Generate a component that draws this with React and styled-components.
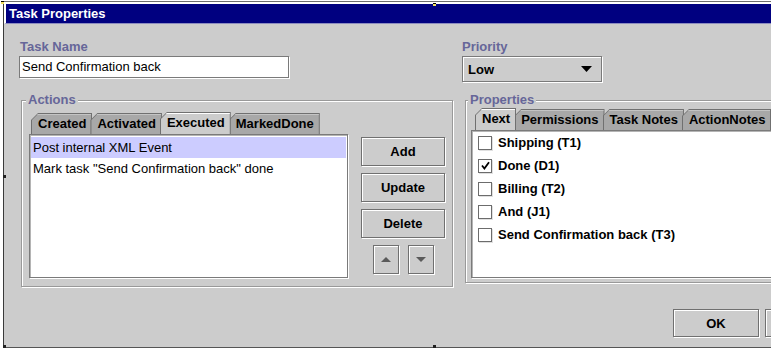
import React from "react";
import styled, { createGlobalStyle } from "styled-components";

const GlobalStyle = createGlobalStyle`
  html, body { margin: 0; padding: 0; background: #ffffff; overflow: hidden; }
  body { font-family: "Liberation Sans", Arial, sans-serif; font-size: 13px; }
  * { box-sizing: border-box; }
`;

const leftTabs = ["Created", "Activated", "Executed", "MarkedDone"];
const rightTabs = ["Next", "Permissions", "Task Notes", "ActionNotes"];
const actions = ["Post internal XML Event", 'Mark task "Send Confirmation back" done'];
const nextTasks = [
  { label: "Shipping (T1)", checked: false },
  { label: "Done (D1)", checked: true },
  { label: "Billing (T2)", checked: false },
  { label: "And (J1)", checked: false },
  { label: "Send Confirmation back (T3)", checked: false },
];

function Tabs({ items, active, lead }) {
  return (
    <TabStrip lead={lead}>
      {items.map((t) => (
        <Tab key={t} active={t === active}>
          <TabFace active={t === active}>{t}</TabFace>
        </Tab>
      ))}
    </TabStrip>
  );
}

function App() {
  return (
    <Page>
      <GlobalStyle />
      <Window>
        <TitleBar>Task Properties</TitleBar>
        <Content>
          <Main>
            <Column>
              <Label>Task Name</Label>
              <TextField>Send Confirmation back</TextField>
              <Group top={15} left={1} padTop={5} padSide={7} padBottom={8}>
                <Legend>Actions</Legend>
                <GroupRow>
                  <TabPane>
                    <Tabs items={leftTabs} active="Executed" lead={2} />
                    <ListBox height={144}>
                      {actions.map((a, i) => (
                        <ListRow key={a} selected={i === 0}>{a}</ListRow>
                      ))}
                    </ListBox>
                  </TabPane>
                  <ButtonColumn>
                    <Btn>Add</Btn>
                    <Btn>Update</Btn>
                    <Btn>Delete</Btn>
                    <ArrowRow>
                      <ArrowBtn>
                        <svg width="10" height="6" viewBox="0 0 10 6"><polygon points="0,5 5,0 10,5" fill="#5a5a5a" /></svg>
                      </ArrowBtn>
                      <ArrowBtn>
                        <svg width="10" height="6" viewBox="0 0 10 6"><polygon points="0,0 10,0 5,5" fill="#5a5a5a" /></svg>
                      </ArrowBtn>
                    </ArrowRow>
                  </ButtonColumn>
                </GroupRow>
              </Group>
            </Column>
            <Column>
              <Label>Priority</Label>
              <Combo>
                <span>Low</span>
                <svg width="11" height="6" viewBox="0 0 11 6"><polygon points="0,0 11,0 5.5,6" fill="#000" /></svg>
              </Combo>
              <Group top={11} left={3} padTop={1} padSide={5} padBottom={4}>
                <Legend>Properties</Legend>
                <TabPane>
                  <Tabs items={rightTabs} active="Next" lead={4} />
                  <ListBox height={148} flat>
                    {nextTasks.map((n) => (
                      <CheckRow key={n.label}>
                        <CheckBox>
                          {n.checked && (
                            <svg width="9" height="9" viewBox="0 0 9 9">
                              <path d="M1 4.5 L3.4 7.5 L8 1.2" stroke="#000" strokeWidth="1.8" fill="none" />
                            </svg>
                          )}
                        </CheckBox>
                        <CheckLabel>{n.label}</CheckLabel>
                      </CheckRow>
                    ))}
                  </ListBox>
                </TabPane>
              </Group>
            </Column>
          </Main>
          <Footer>
            <FooterBtn>OK</FooterBtn>
            <FooterBtn>Cancel</FooterBtn>
          </Footer>
        </Content>
      </Window>
      <Handle x={1} y={1} yellow />
      <Handle x={433} y={3} yellow />
      <Handle x={3} y={175} />
      <Handle x={3} y={345} />
      <Handle x={433} y={345} />
    </Page>
  );
}

export default App;

const Page = styled.div`
  position: relative;
  width: 771px;
  height: 350px;
  padding: 1px 0 0 3px;
  overflow: hidden;
`;

const Window = styled.div`
  width: 860px;
  background: #cccccc;
  border-top: 1px solid #6e6e6e;
  border-left: 1px solid #3a3a3a;
  border-bottom: 1px solid #555555;
`;

const TitleBar = styled.div`
  height: 22px;
  background: #000080;
  border-top: 2px solid #ffffff;
  border-left: 2px solid #ffffff;
  border-bottom: 1px solid #8c8cc0;
  color: #ffffff;
  font-weight: 700;
  font-size: 13px;
  line-height: 19px;
  padding-left: 3px;
`;

const Content = styled.div`
  height: 323px;
  display: flex;
  flex-direction: column;
  padding: 16px 12px 10px 16px;
`;

const Main = styled.div`
  display: grid;
  grid-template-columns: 433px 1fr;
  column-gap: 9px;
`;

const Column = styled.div`
  display: flex;
  flex-direction: column;
  align-items: flex-start;
  min-width: 0;
`;

const Label = styled.div`
  font-weight: 700;
  font-size: 13px;
  line-height: 14px;
  color: #666699;
  margin-bottom: 2px;
`;

const TextField = styled.div`
  width: 270px;
  height: 22px;
  margin-left: -1px;
  background: #ffffff;
  border: 1px solid #7a7a7a;
  box-shadow: 1px 1px 0 #ffffff;
  padding-left: 2px;
  line-height: 20px;
  color: #000;
`;

const Combo = styled.div`
  width: 140px;
  height: 26px;
  display: flex;
  align-items: center;
  justify-content: space-between;
  padding: 0 9px 0 5px;
  background: #cccccc;
  border: 1px solid #7a7a7a;
  box-shadow: inset 1px 1px 0 #ffffff, 1px 1px 0 #ffffff;
  font-weight: 700;
  color: #000;
`;

const Group = styled.fieldset`
  align-self: stretch;
  min-width: 0;
  margin: ${({ top }) => top}px 0 0 ${({ left }) => left}px;
  padding: ${({ padTop, padSide, padBottom }) => `${padTop}px ${padSide}px ${padBottom}px ${padSide}px`};
  border: 1px solid #999999;
  box-shadow: inset 1px 1px 0 #ffffff, 1px 1px 0 #ffffff;
`;

const Legend = styled.legend`
  padding: 0 2px;
  margin-left: -3px;
  background: #cccccc;
  font-weight: 700;
  font-size: 13px;
  line-height: 14px;
  color: #666699;
`;

const GroupRow = styled.div`
  display: flex;
  align-items: flex-start;
`;

const TabPane = styled.div`
  display: flex;
  flex-direction: column;
  width: 320px;
  fieldset > & { width: auto; }
`;

const TabStrip = styled.div`
  display: flex;
  align-items: flex-end;
  height: 22px;
  padding-left: ${({ lead }) => lead}px;
`;

const Tab = styled.div`
  position: relative;
  z-index: ${({ active }) => (active ? 2 : 1)};
  height: ${({ active }) => (active ? 22 : 21)}px;
  margin-left: -2px;
  padding: 1px 1px 0 1px;
  background: #707070;
  clip-path: polygon(0 7px, 7px 0, 100% 0, 100% 100%, 0 100%);
  &:first-child { margin-left: 0; }
`;

const TabFace = styled.div`
  height: 100%;
  padding: 0 5px 0 6px;
  background: ${({ active }) => (active ? "#cccccc" : "#a8a8a8")};
  box-shadow: inset 0 1px 0 ${({ active }) => (active ? "#ffffff" : "#c4c4c4")};
  clip-path: polygon(0 6px, 6px 0, 100% 0, 100% 100%, 0 100%);
  font-weight: 700;
  font-size: 13px;
  line-height: 20px;
  color: #000;
  white-space: nowrap;
`;

const ListBox = styled.div`
  height: ${({ height }) => height}px;
  background: #ffffff;
  border: 1px solid #7a7a7a;
  box-shadow: 1px 1px 0 #ffffff, inset 1px 1px 0 #b4b4b4;
  padding: ${({ flat }) => (flat ? "0 1px" : "2px 1px")};
`;

const ListRow = styled.div`
  height: 21px;
  line-height: 21px;
  padding-left: 2px;
  background: ${({ selected }) => (selected ? "#ccccff" : "transparent")};
  color: #000;
  white-space: nowrap;
`;

const CheckRow = styled.div`
  height: 23px;
  display: flex;
  align-items: center;
  gap: 6px;
  padding-left: 5px;
`;

const CheckBox = styled.span`
  width: 14px;
  height: 14px;
  display: inline-flex;
  align-items: center;
  justify-content: center;
  background: #ffffff;
  border: 1px solid #6c6c6c;
  box-shadow: 1px 1px 0 #e0e0e0;
`;

const CheckLabel = styled.span`
  font-weight: 700;
  font-size: 13px;
  color: #000;
  white-space: nowrap;
`;

const ButtonColumn = styled.div`
  width: 84px;
  margin-left: 13px;
  padding-top: 25px;
  display: flex;
  flex-direction: column;
  gap: 7px;
`;

const Btn = styled.button`
  width: 84px;
  height: 29px;
  padding: 0;
  background: #cccccc;
  border: 1px solid #707070;
  box-shadow: inset 1px 1px 0 #ffffff, 1px 1px 0 #ffffff;
  font-family: "Liberation Sans", Arial, sans-serif;
  font-weight: 700;
  font-size: 13px;
  color: #000;
`;

const ArrowRow = styled.div`
  display: flex;
  justify-content: center;
  gap: 9px;
`;

const ArrowBtn = styled(Btn)`
  width: 26px;
  display: flex;
  align-items: center;
  justify-content: center;
`;

const Footer = styled.div`
  margin-top: auto;
  display: flex;
  justify-content: flex-end;
  gap: 6px;
`;

const FooterBtn = styled(Btn)`
  width: 86px;
  height: 28px;
`;

const Handle = styled.span`
  position: absolute;
  left: ${({ x }) => x}px;
  top: ${({ y }) => y}px;
  width: 3px;
  height: 3px;
  background: ${({ yellow }) => (yellow ? "#f0e060" : "#202020")};
  border-top: ${({ yellow }) => (yellow ? "1px solid #000" : "none")};
`;
